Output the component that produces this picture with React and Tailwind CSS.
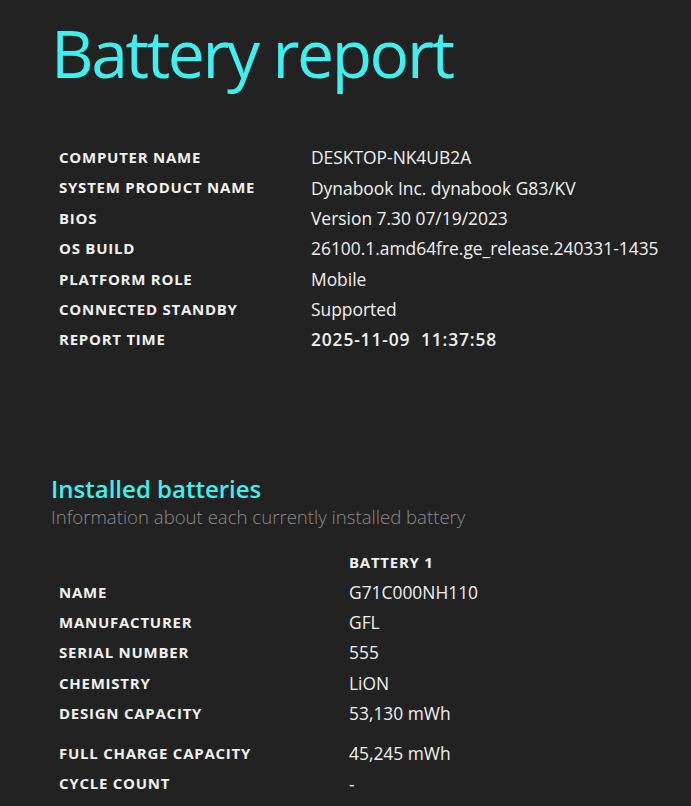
export default function App() {
  const sys = [
    ["COMPUTER NAME", "DESKTOP-NK4UB2A"],
    ["SYSTEM PRODUCT NAME", "Dynabook Inc. dynabook G83/KV"],
    ["BIOS", "Version 7.30 07/19/2023"],
    ["OS BUILD", "26100.1.amd64fre.ge_release.240331-1435"],
    ["PLATFORM ROLE", "Mobile"],
    ["CONNECTED STANDBY", "Supported"],
  ];
  const bat = [
    ["NAME", "G71C000NH110"],
    ["MANUFACTURER", "GFL"],
    ["SERIAL NUMBER", "555"],
    ["CHEMISTRY", "LiON"],
    ["DESIGN CAPACITY", "53,130 mWh"],
  ];
  const label = "text-[15px] font-bold tracking-[0.75px]";
  const value = "text-[17.4px]";
  return (
    <div className="min-h-[806px] bg-[#222222] pl-[48px] text-[#f2f2f2] overflow-hidden" style={{ fontFamily: '"Open Sans", "Noto Sans", sans-serif' }}>
      <h1 className="pt-[10px] pl-[3px] text-[66px] leading-[84px] text-[#3ef0f0] tracking-[-2.4px]">Battery report</h1>
      <div className="mt-[48px] pl-[11px]">
        {sys.map(([k, v]) => (
          <div key={k} className="flex h-[30.4px] items-center">
            <div className={`w-[252px] ${label}`}>{k}</div>
            <div className={value}>{v}</div>
          </div>
        ))}
        <div className="flex h-[30.4px] items-center">
          <div className={`w-[252px] ${label}`}>REPORT TIME</div>
          <div className="text-[17.4px] font-semibold whitespace-pre tracking-[0.85px]">2025-11-09  11:37:58</div>
        </div>
      </div>
      <h2 className="mt-[119px] pl-[3px] text-[24px] leading-[30px] font-semibold text-[#3ef0f0]">Installed batteries</h2>
      <p className="pl-[3px] text-[18.6px] leading-[26px] font-light text-[#8c8c8c]">Information about each currently installed battery</p>
      <div className="mt-[19px] pl-[11px]">
        <div className="flex h-[28px] items-center">
          <div className="w-[290px]"></div>
          <div className={label}>BATTERY 1</div>
        </div>
        {bat.map(([k, v]) => (
          <div key={k} className="flex h-[30.3px] items-center">
            <div className={`w-[290px] ${label}`}>{k}</div>
            <div className={value}>{v}</div>
          </div>
        ))}
        <div className="mt-[10px] flex h-[30.3px] items-center">
          <div className={`w-[290px] ${label}`}>FULL CHARGE CAPACITY</div>
          <div className={value}>45,245 mWh</div>
        </div>
        <div className="flex h-[30.3px] items-center">
          <div className={`w-[290px] ${label}`}>CYCLE COUNT</div>
          <div className={value}>-</div>
        </div>
      </div>
    </div>
  );
}
